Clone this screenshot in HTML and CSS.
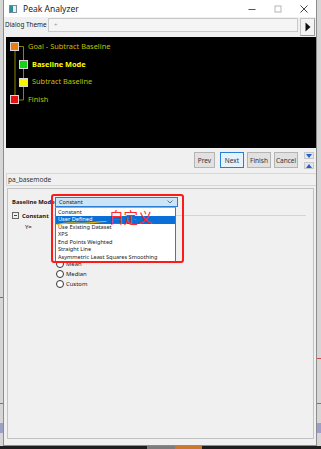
FILE: index.html
```html
<!DOCTYPE html>
<html lang="en">
<head>
  <meta charset="UTF-8" />
  <title>Peak Analyzer</title>
  <link rel="stylesheet" href="styles.css">
</head>
<body>
  <div class="backdrop">
    <span class="mark mark-l1"></span>
    <span class="mark mark-l2"></span>
    <span class="mark mark-l3"></span>
    <span class="mark mark-r1"></span>
    <span class="mark mark-r2"></span>
    <span class="mark mark-r3"></span>
  </div>

  <div class="window">
    <div class="titlebar">
      <span class="app-icon"></span>
      <span class="title">Peak Analyzer</span>
      <div class="controls">
        <svg width="10" height="10" viewBox="0 0 10 10"><path d="M1.5 5.5h7" stroke="#555" stroke-width="1"/></svg>
        <svg width="10" height="10" viewBox="0 0 10 10"><rect x="2" y="2" width="6" height="6" fill="none" stroke="#b5b5b5" stroke-width="1"/></svg>
        <svg width="10" height="10" viewBox="0 0 10 10"><path d="M1.5 1.5l7 7M8.5 1.5l-7 7" stroke="#444" stroke-width="1"/></svg>
      </div>
    </div>

    <div class="theme-row">
      <span class="theme-label">Dialog Theme</span>
      <div class="theme-combo">+</div>
      <div class="theme-btn">
        <svg width="6" height="10" viewBox="0 0 6 10"><path d="M0.5 0.5L5.5 5L0.5 9.5Z" fill="#111"/></svg>
      </div>
    </div>

    <div class="map">
      <svg class="map-lines" width="30" height="72" viewBox="0 0 30 72">
        <path d="M9 13V59M12.5 9.5H17.5V63H12.5" fill="none" stroke="#8c8500" stroke-width="1"/>
        <rect x="4.5" y="5.5" width="8" height="8" fill="#f07a10" stroke="#d8d8d8"/>
        <rect x="13.5" y="23.5" width="8" height="8" fill="#17d117" stroke="#d8d8d8"/>
        <rect x="13.5" y="41.5" width="8" height="8" fill="#f5f500" stroke="#d8d8d8"/>
        <rect x="4.5" y="58.5" width="8" height="8" fill="#e81010" stroke="#d8d8d8"/>
      </svg>
      <ul class="steps">
        <li class="step">Goal - Subtract Baseline</li>
        <li class="step sub current">Baseline Mode</li>
        <li class="step sub">Subtract Baseline</li>
        <li class="step">Finish</li>
      </ul>
    </div>

    <div class="nav-row">
      <button class="btn btn-prev">Prev</button>
      <button class="btn btn-next">Next</button>
      <button class="btn">Finish</button>
      <button class="btn">Cancel</button>
      <div class="updown">
        <span class="ud-btn"><svg width="6" height="4" viewBox="0 0 6 4"><path d="M0 0H6L3 4Z" fill="#1f5fd6"/></svg></span>
        <span class="ud-btn"><svg width="6" height="4" viewBox="0 0 6 4"><path d="M0 4H6L3 0Z" fill="#1f5fd6"/></svg></span>
      </div>
    </div>

    <div class="page-name">pa_basemode</div>

    <div class="settings">
      <div class="field-row">
        <span class="field-label">Baseline Mode</span>
        <div class="combo">
          <span>Constant</span>
          <svg width="6" height="4" viewBox="0 0 6 4"><path d="M0.5 0.5L3 3L5.5 0.5" fill="none" stroke="#555" stroke-width="0.8"/></svg>
        </div>
      </div>

      <div class="group-head">
        <span class="collapse-box"></span>
        <span class="group-title">Constant</span>
        <span class="group-line"></span>
      </div>

      <div class="y-row">Y=</div>

      <ul class="radios">
        <li><span class="radio"></span>Mean</li>
        <li><span class="radio"></span>Median</li>
        <li><span class="radio"></span>Custom</li>
      </ul>

      <ul class="dropdown">
        <li>Constant</li>
        <li class="selected">User Defined</li>
        <li>Use Existing Dataset</li>
        <li>XPS</li>
        <li>End Points Weighted</li>
        <li>Straight Line</li>
        <li>Asymmetric Least Squares Smoothing</li>
      </ul>

      <div class="note-box"></div>
      <span class="note-text">自定义</span>
      <svg class="note-underline" width="52" height="6" viewBox="0 0 52 6">
        <path d="M1 4.5C8 3 14 2.5 22 3.2C30 4 38 2 50 1.5" fill="none" stroke="#f2b200" stroke-width="1.2" stroke-linecap="round"/>
      </svg>
    </div>
  </div>

  <div class="taskbar">
    <span class="task task-gray"></span>
    <span class="task task-orange"></span>
  </div>
</body>
</html>
```

FILE: styles.css
```css
body {
  margin: 0;
  width: 321px;
  height: 449px;
  overflow: hidden;
  position: relative;
  background: #d6d6d6;
  font-family: "Noto Sans", Arial, sans-serif;
  color: #1a1a1a;
}
ul {
  list-style: none;
  margin: 0;
  padding: 0;
}

/* stuff from the graph behind the dialog */
.backdrop .mark {
  position: absolute;
  display: block;
}
.mark-l1 { left: 0; top: 297px; width: 3px; height: 1px; background: #e04040; }
.mark-l2 { left: 0; top: 403px; width: 3px; height: 1px; background: #777; }
.mark-l3 { left: 0; top: 423px; width: 3px; height: 10px; background: #9aa0c8; }
.mark-r1 { left: 317px; top: 358px; width: 4px; height: 1px; background: #e04040; }
.mark-r2 { left: 317px; top: 403px; width: 4px; height: 1px; background: #777; }
.mark-r3 { left: 317px; top: 423px; width: 4px; height: 10px; background: #9aa0c8; }

.window {
  position: relative;
  margin-left: 3px;
  width: 312px;
  height: 445px;
  border: 1px solid #8c8c8c;
  border-top: none;
  background: #f0f0f0;
  display: flex;
  flex-direction: column;
}

.titlebar {
  height: 17px;
  background: #ffffff;
  display: flex;
  align-items: center;
  padding-left: 5px;
  font-size: 8.5px;
}
.app-icon {
  width: 6px;
  height: 6px;
  border: 1px solid #7a8a9a;
  background: linear-gradient(90deg, #2b8f9a 50%, #e8eef2 50%);
}
.title {
  margin-left: 6px;
  color: #222;
}
.controls {
  margin-left: auto;
  margin-right: 7px;
  display: flex;
  gap: 16px;
}

.theme-row {
  height: 20px;
  display: flex;
  align-items: flex-start;
  padding-left: 1px;
}
.theme-label {
  width: 43px;
  font-size: 6.4px;
  line-height: 14px;
  margin-top: 1px;
  white-space: nowrap;
}
.theme-combo {
  margin-top: 1px;
  width: 248px;
  height: 12px;
  border: 1px solid #c9c9c9;
  background: #f5f5f5;
  font-size: 6px;
  line-height: 12px;
  text-indent: 5px;
  color: #999;
}
.theme-btn {
  margin-left: 2px;
  margin-top: 1px;
  width: 13px;
  height: 16px;
  border: 1px solid #c4c4c4;
  border-right-color: #9a9a9a;
  border-bottom-color: #9a9a9a;
  background: #f4f4f4;
  display: flex;
  align-items: center;
  justify-content: center;
}

.map {
  position: relative;
  margin-left: 2px;
  height: 111px;
  background: #000000;
}
.map-lines {
  position: absolute;
  left: 0;
  top: 0;
}
.steps {
  padding-top: 1px;
  padding-left: 22px;
}
.step {
  height: 17.6px;
  line-height: 17.6px;
  font-size: 7.4px;
  color: #c8bf00;
  white-space: nowrap;
}
.step.sub {
  padding-left: 4px;
}
.step.current {
  color: #ffff00;
  font-weight: bold;
}

.nav-row {
  height: 25px;
  display: flex;
  align-items: flex-start;
  justify-content: flex-end;
  padding-top: 4px;
  padding-right: 2px;
  box-sizing: border-box;
  gap: 3px;
}
.btn {
  height: 16px;
  width: 24px;
  padding: 0;
  border: 1px solid #b4b4b4;
  background: #e1e1e1;
  font-family: "Noto Sans", Arial, sans-serif;
  font-size: 6.5px;
  color: #333;
}
.btn-prev {
  width: 21px;
  margin-right: 2px;
}
.btn-next {
  border-color: #2a7fd4;
  background: #e5f1fb;
}
.updown {
  margin-left: 3px;
  display: flex;
  flex-direction: column;
  gap: 3px;
}
.ud-btn {
  width: 10px;
  height: 7px;
  background: #e6e6e6;
  border: 1px solid #c8c8c8;
  box-sizing: border-box;
  display: flex;
  align-items: center;
  justify-content: center;
}

.page-name {
  margin-left: 2px;
  height: 13px;
  border: 1px solid #d6d6d6;
  border-right: none;
  box-sizing: border-box;
  font-size: 6.6px;
  line-height: 11px;
  padding-left: 1px;
  color: #333;
}

.settings {
  position: relative;
  margin: 2px 2px 0 3px;
  height: 251px;
  border: 1px solid #c2c2c2;
  box-sizing: border-box;
  padding: 8px 0 0 4px;
  font-size: 5.9px;
}
.field-row {
  display: flex;
  align-items: center;
  height: 10px;
}
.field-label {
  width: 43px;
  font-weight: bold;
  white-space: nowrap;
}
.combo {
  width: 115px;
  height: 8px;
  border: 1px solid #2a7fd4;
  background: #cce4f7;
  display: flex;
  align-items: center;
  justify-content: space-between;
  padding: 0 4px 0 2px;
  font-size: 5.6px;
}
.combo span {
  margin-left: 1px;
}

.group-head {
  margin-top: 4px;
  height: 9px;
  display: flex;
  align-items: center;
}
.collapse-box {
  width: 5px;
  height: 5px;
  border: 1px solid #666;
  position: relative;
}
.collapse-box::after {
  content: "";
  position: absolute;
  left: 1px;
  top: 2px;
  width: 3px;
  height: 1px;
  background: #444;
}
.group-title {
  margin-left: 3px;
  font-weight: bold;
}
.group-line {
  flex: 1;
  height: 1px;
  margin: 0 7px 0 5px;
  background: #d4d4d4;
}

.y-row {
  margin-top: 3px;
  height: 8px;
  line-height: 8px;
  padding-left: 13px;
}

.radios {
  margin-top: 28px;
  margin-left: 44px;
}
.radios li {
  height: 10px;
  display: flex;
  align-items: center;
  gap: 2px;
}
.radio {
  width: 6px;
  height: 6px;
  border: 1px solid #333;
  border-radius: 50%;
  background: #fff;
}

.dropdown {
  position: absolute;
  left: 47px;
  top: 18px;
  width: 121px;
  height: 55px;
  border: 1px solid #2a7fd4;
  border-top-color: #9ab;
  background: #ffffff;
  box-sizing: border-box;
  padding-top: 0.5px;
}
.dropdown li {
  height: 7.6px;
  line-height: 7.6px;
  padding-left: 2px;
  font-size: 5.6px;
  white-space: nowrap;
}
.dropdown li.selected {
  background: #0a6fd6;
  color: #ffffff;
}

.note-box {
  position: absolute;
  left: 43px;
  top: 5px;
  width: 133px;
  height: 69px;
  border: 2px solid #ff1a1a;
  border-radius: 3px;
  box-sizing: border-box;
}
.note-text {
  position: absolute;
  left: 101px;
  top: 20px;
  font-family: "Noto Sans CJK SC", sans-serif;
  font-size: 14.5px;
  line-height: 16px;
  color: #ff2a2a;
}
.note-underline {
  position: absolute;
  left: 48px;
  top: 31px;
}

.taskbar {
  position: relative;
  height: 3px;
  background: #1e1e1e;
}
.task {
  position: absolute;
  top: 0;
  height: 3px;
}
.task-gray { left: 147px; width: 28px; background: #7c7c7c; }
.task-orange { left: 175px; width: 27px; background: #c9782e; }
```
